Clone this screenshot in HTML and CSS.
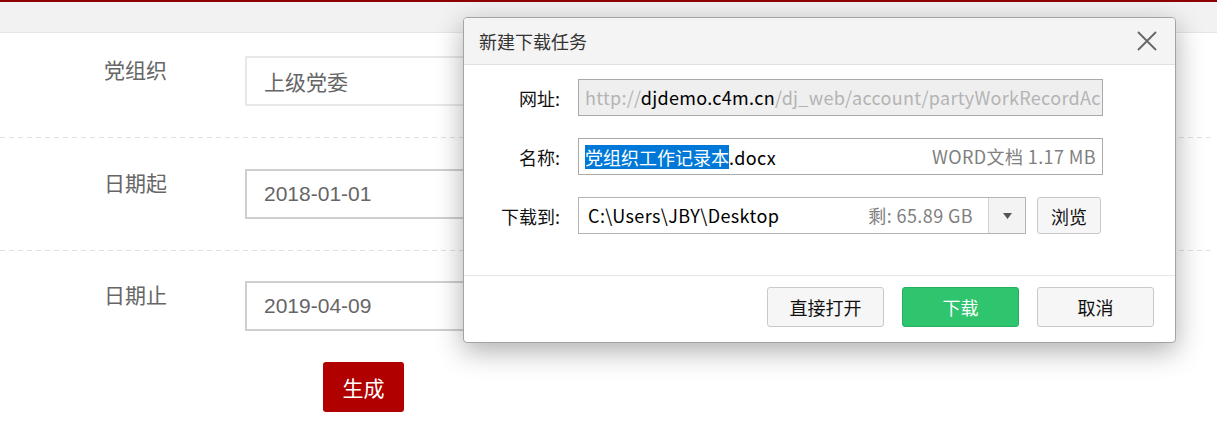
FILE: index.html
```html
<!DOCTYPE html>
<html lang="zh-CN">
<head>
<meta charset="utf-8">
<title>新建下载任务</title>
<link rel="stylesheet" href="styles.css">
</head>
<body>
<div class="page">
  <div class="topbar"></div>
  <div class="form">
    <div class="row first">
      <div class="label">党组织</div>
      <div class="field readonly">上级党委</div>
    </div>
    <div class="sep"></div>
    <div class="row">
      <div class="label">日期起</div>
      <div class="field">2018-01-01</div>
    </div>
    <div class="sep"></div>
    <div class="row last">
      <div class="label">日期止</div>
      <div class="field">2019-04-09</div>
    </div>
    <div class="actions"><button class="btn-gen">生成</button></div>
  </div>

  <div class="dialog">
    <div class="dlg-head">
      <span class="dlg-title">新建下载任务</span>
      <svg class="dlg-close" width="20" height="20" viewBox="0 0 20 20"><path d="M1 1 L19 19 M19 1 L1 19" stroke="#666" stroke-width="1.8" fill="none"/></svg>
    </div>
    <div class="dlg-body">
      <div class="dlg-row">
        <div class="dlg-label">网址:</div>
        <div class="dlg-input url"><span class="dim">http://</span>djdemo.c4m.cn<span class="dim">/dj_web/account/partyWorkRecordAc</span></div>
      </div>
      <div class="dlg-row">
        <div class="dlg-label">名称:</div>
        <div class="dlg-input name"><span class="sel">党组织工作记录本</span><span class="ext">.docx</span><span class="meta">WORD文档 1.17 MB</span></div>
      </div>
      <div class="dlg-row">
        <div class="dlg-label">下载到:</div>
        <div class="dlg-select">
          <span class="path">C:\Users\JBY\Desktop</span>
          <span class="meta">剩: 65.89 GB</span>
          <span class="drop"><svg width="9" height="6" viewBox="0 0 9 6"><path d="M0 0 H9 L4.5 6 Z" fill="#555"/></svg></span>
        </div>
        <button class="btn small">浏览</button>
      </div>
    </div>
    <div class="dlg-foot">
      <button class="btn">直接打开</button>
      <button class="btn green">下载</button>
      <button class="btn">取消</button>
    </div>
  </div>
</div>
</body>
</html>
```

FILE: styles.css
```css
html, body {
  margin: 0;
  padding: 0;
  background: #fff;
}
.page {
  position: relative;
  width: 1217px;
  height: 430px;
  overflow: hidden;
  font-family: "Liberation Sans", "Noto Sans CJK SC", sans-serif;
}
.topbar {
  height: 30px;
  border-top: 2px solid #8e0000;
  border-bottom: 1px solid #e3e6ea;
  background: #f2f2f2;
}
.form {
  padding-right: 7px;
}
.row {
  display: flex;
  align-items: flex-start;
  padding: 31px 0 31px 0;
}
.row.first {
  padding-top: 23px;
}
.row.last {
  padding-top: 30px;
}
.label {
  width: 245px;
  box-sizing: border-box;
  padding-left: 104px;
  margin-top: -2px;
  font-size: 21px;
  line-height: 30px;
  color: #666;
  font-family: "Noto Sans CJK SC", sans-serif;
}
.field {
  width: 480px;
  height: 50px;
  box-sizing: border-box;
  border: 2px solid #cfcfcf;
  padding: 0 17px;
  font-size: 21px;
  line-height: 46px;
  color: #666;
}
.field.readonly {
  border-color: #e8e8e8;
  font-family: "Noto Sans CJK SC", sans-serif;
}
.sep {
  height: 1px;
  background: repeating-linear-gradient(to right, #dde1e6 0 5px, transparent 5px 9px);
}
.actions {
  padding-left: 323px;
}
.btn-gen {
  width: 81px;
  height: 50px;
  border: 0;
  border-radius: 3px;
  background: #b00000;
  color: #fff;
  font-size: 21px;
  font-family: "Noto Sans CJK SC", sans-serif;
  padding: 0;
}

/* dialog */
.dialog {
  position: absolute;
  left: 463px;
  top: 17px;
  width: 713px;
  height: 326px;
  box-sizing: border-box;
  border: 1px solid #a4a4a4;
  border-radius: 4px;
  background: #fff;
  box-shadow: 0 8px 28px rgba(0, 0, 0, 0.32);
  font-family: "Noto Sans CJK SC", sans-serif;
  font-size: 18px;
  color: #000;
  display: flex;
  flex-direction: column;
}
.dlg-head {
  height: 46px;
  display: flex;
  align-items: center;
  justify-content: space-between;
  padding: 0 18px 0 15px;
  background: #f4f4f4;
  border-bottom: 1px solid #e1e1e1;
  border-radius: 3px 3px 0 0;
}
.dlg-title {
  color: #333;
  font-size: 18px;
}
.dlg-body {
  height: 210px;
  box-sizing: border-box;
  padding-top: 14px;
  display: flex;
  flex-direction: column;
  gap: 22px;
}
.dlg-row {
  display: flex;
  align-items: center;
  height: 37px;
}
.dlg-label {
  width: 96px;
  text-align: right;
  margin-right: 18px;
  color: #111;
}
.dlg-input {
  width: 525px;
  height: 37px;
  box-sizing: border-box;
  border: 1px solid #a9a9a9;
  padding: 0 6px;
  line-height: 35px;
  white-space: nowrap;
  overflow: hidden;
  display: flex;
  letter-spacing: 0.4px;
}
.dlg-input.url {
  background: #efefef;
  display: block;
  padding-right: 2px;
  letter-spacing: 0.3px;
}
.dim {
  color: #b4b4b4;
}
.sel {
  background: #0078d7;
  color: #fff;
  line-height: 24px;
  align-self: center;
  letter-spacing: 0;
}
.ext {
  align-self: center;
  line-height: 24px;
}
.meta {
  margin-left: auto;
  color: #7f7f7f;
}
.dlg-select {
  width: 448px;
  height: 37px;
  box-sizing: border-box;
  border: 1px solid #b4b4b4;
  display: flex;
  align-items: center;
  line-height: 35px;
  padding-left: 9px;
  letter-spacing: 0.4px;
}
.dlg-select .meta {
  margin-right: 15px;
}
.drop {
  width: 36px;
  height: 35px;
  border-left: 1px solid #d2d2d2;
  background: #f3f3f3;
  display: flex;
  align-items: center;
  justify-content: center;
}
.btn {
  width: 117px;
  height: 40px;
  box-sizing: border-box;
  border: 1px solid #c9c9c9;
  border-radius: 3px;
  background: #f6f6f6;
  font-family: "Noto Sans CJK SC", sans-serif;
  font-size: 18px;
  color: #111;
  padding: 0;
}
.btn.small {
  width: 64px;
  height: 37px;
  margin-left: 11px;
}
.btn.green {
  background: #2ec56e;
  border-color: #22b05e;
  color: #fff;
}
.dlg-foot {
  flex: 1;
  border-top: 1px solid #e6e6e6;
  display: flex;
  justify-content: flex-end;
  align-items: flex-start;
  gap: 18px;
  padding: 11px 21px 0 0;
}
```
